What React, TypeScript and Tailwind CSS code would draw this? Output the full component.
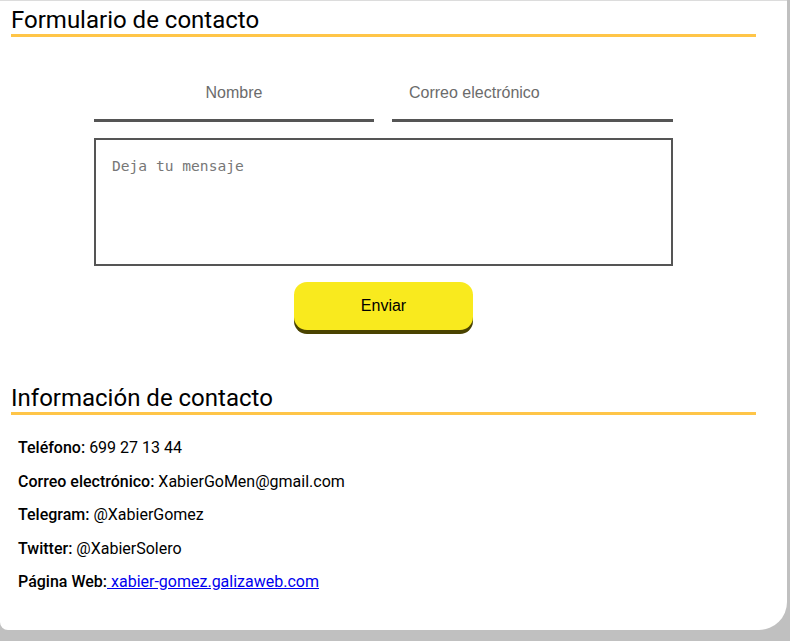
import React from "react";

const roboto = { fontFamily: "Roboto, 'Liberation Sans', sans-serif" };

function Heading({ children }: { children: React.ReactNode }) {
  return (
    <h2
      className="ml-[11px] w-[745px] border-b-[3px] border-[#ffc548] pt-[2px] text-[24px] leading-[28px] font-normal text-black"
      style={roboto}
    >
      {children}
    </h2>
  );
}

export default function App() {
  return (
    <div className="w-[790px] h-[641px] bg-[#c0c0c0] overflow-hidden">
      <div className="w-[787px] h-[630px] bg-white border-t border-[#dcdcdc] rounded-br-[28px] rounded-bl-[8px] pt-[3px]">
        <Heading>Formulario de contacto</Heading>

        <form
          className="ml-[94px] w-[579px] mt-[30px] flex flex-col"
          style={{ fontFamily: "'Liberation Sans', Arial, sans-serif" }}
          onSubmit={(e) => e.preventDefault()}
        >
          <div className="flex gap-[18px]">
            <input
              type="text"
              placeholder="Nombre"
              className="w-[280px] h-[55px] border-b-[3px] border-[#555] text-center text-[16px] outline-none placeholder:text-[#6b6b6b]"
            />
            <input
              type="email"
              placeholder="Correo electrónico"
              className="w-[281px] h-[55px] border-b-[3px] border-[#555] pl-[17px] text-[16px] outline-none placeholder:text-[#6b6b6b]"
            />
          </div>
          <textarea
            placeholder="Deja tu mensaje"
            className="mt-[16px] h-[128px] w-[579px] border-2 border-[#555] px-[16px] pt-[17px] text-[14.6px] leading-[17px] resize-none outline-none placeholder:text-[#777]"
            style={{ fontFamily: "'DejaVu Sans Mono', monospace" }}
          />
          <button
            type="submit"
            className="mt-[16px] mx-auto w-[179px] h-[48px] rounded-[13px] bg-[#f9ea1e] text-black text-[16px] shadow-[0_4px_0_#4a4300]"
          >
            Enviar
          </button>
        </form>

        <div className="mt-[52px]">
          <Heading>Información de contacto</Heading>
        </div>

        <div
          className="ml-[18px] mt-[24px] flex flex-col gap-[15.5px] text-[16px] leading-[18px] text-black"
          style={roboto}
        >
          <p>
            <span className="font-medium">Teléfono:</span> 699 27 13 44
          </p>
          <p>
            <span className="font-medium">Correo electrónico:</span> XabierGoMen@gmail.com
          </p>
          <p>
            <span className="font-medium">Telegram:</span> @XabierGomez
          </p>
          <p>
            <span className="font-medium">Twitter:</span> @XabierSolero
          </p>
          <p>
            <span className="font-medium">Página Web:</span>
            <a href="#" className="text-[#0000ee] underline">
              {" "}xabier-gomez.galizaweb.com
            </a>
          </p>
        </div>
      </div>
    </div>
  );
}
